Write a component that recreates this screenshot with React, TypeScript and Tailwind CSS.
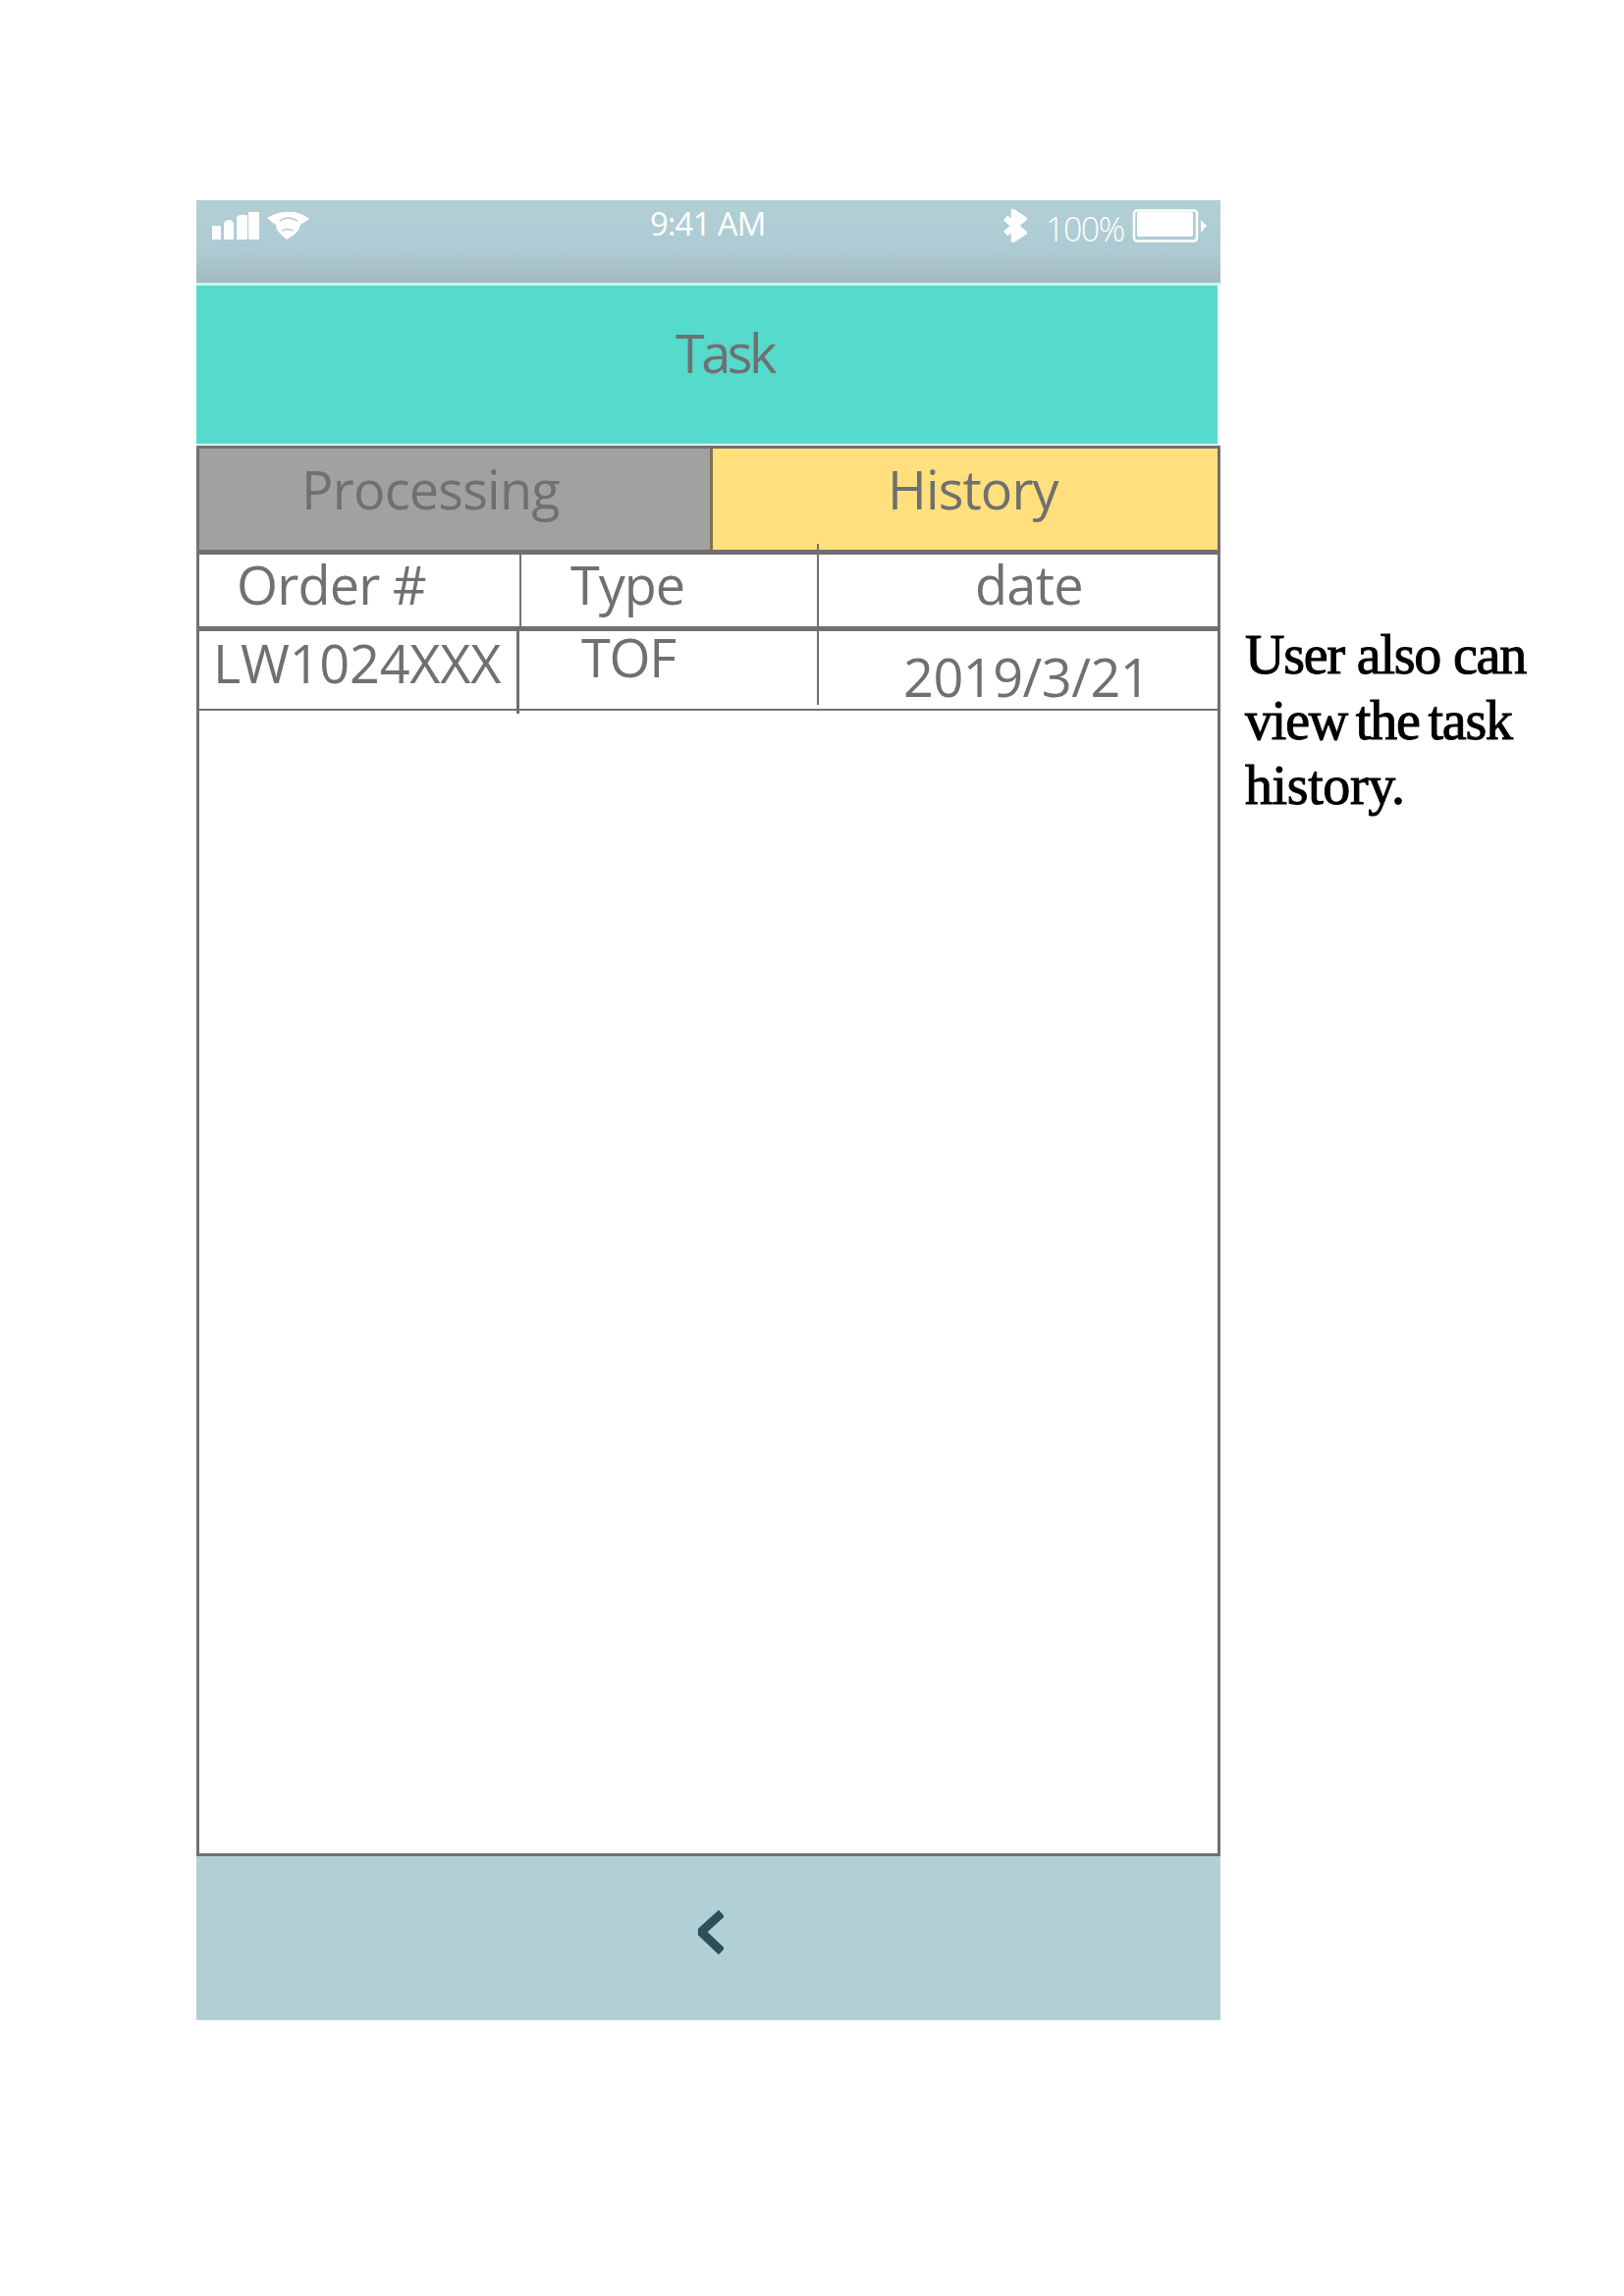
import React from "react";

const label =
  "block whitespace-nowrap font-['Open_Sans','Noto_Sans',sans-serif] text-[54px] leading-[60px] text-[#707070]";

function StatusBar() {
  return (
    <div className="flex h-[84px] items-start bg-linear-to-b from-[#b1cfd5] from-0% via-[#adcbd2] via-62% to-[#a3b8c0] to-100% text-white font-['Open_Sans',sans-serif]">
      <svg className="ml-4 mt-3 h-[29px] w-[49px]" viewBox="0 0 49 29" fill="#fff">
        <rect x="0" y="14" width="9" height="14" />
        <path d="M12 28V11l3-3h4l3 3v17z" />
        <path d="M25 28V5l3-2h8v25z" />
        <rect x="37" y="0" width="11" height="28" />
      </svg>
      <svg className="ml-1.5 mt-3 h-[29px] w-[46px]" viewBox="0 0 46 29" fill="#fff">
        <path d="M1 6Q10 1 17 0H29Q38 2 44 7Q38 11 35 13Q34 21 21 28Q10 20 10 13Q5 10 1 6Z" />
        <path d="M14 9Q22 3 32 9M16 19Q22 16 28 19" fill="none" stroke="#b9c9cf" strokeWidth="1.5" />
      </svg>
      <span className="ml-[345px] mt-[4px] w-[130px] whitespace-nowrap text-[33px] leading-[40px] tracking-[-1px]">
        9:41 AM
      </span>
      <svg className="ml-[230px] mt-[9px] h-[34px] w-[24px]" viewBox="0 0 24 34" fill="none" stroke="#fff" strokeWidth="6.5">
        <path d="M2 9L20 24L11 30V4L20 10L2 25" />
      </svg>
      <span className="ml-[19px] mt-[9px] w-[88px] whitespace-nowrap text-[34px] font-light leading-[40px] tracking-[-1.5px]">
        100%
      </span>
      <svg className="mt-[9px] h-[34px] w-[76px]" viewBox="0 0 76 34">
        <rect x="2" y="1.5" width="64" height="31" rx="3" fill="none" stroke="#fff" strokeWidth="2.5" />
        <rect x="5" y="3" width="57" height="25" rx="2" fill="#fff" />
        <path d="M70 11L76 17L70 24Z" fill="#fff" />
      </svg>
    </div>
  );
}

function Tabs() {
  return (
    <div className="flex h-[106px] border-t-[3px] border-[#707070]">
      <div className="w-[520px] bg-[#a1a1a1] pl-[104px] pt-[11px]">
        <span className={`${label} tracking-[-0.8px]`}>Processing</span>
      </div>
      <div className="grow border-l-[3px] border-[#80704f] bg-[#ffe07d] pl-[178px] pt-[11px]">
        <span className={`${label} tracking-[-0.9px]`}>History</span>
      </div>
    </div>
  );
}

function HistoryTable() {
  return (
    <div className="relative">
      <div className="flex h-[83px] border-y-[5px] border-[#707070] border-b-0">
        <div className="w-[328px] border-r-[2px] border-[#707070] pl-[38px]">
          <span className={`${label} tracking-[-0.8px]`}>Order #</span>
        </div>
        <div className="w-[304px] pl-[50px]">
          <span className={`${label} tracking-[-1px]`}>Type</span>
        </div>
        <div className="grow pl-[158px]">
          <span className={`${label} tracking-[-0.7px]`}>date</span>
        </div>
      </div>
      <div className="-mt-[5px] flex h-[86px] border-b-[2px] border-t-[5px] border-[#707070]">
        <div className="h-[84px] w-[326px] border-r-[3px] border-[#707070] pl-[14px] pt-[2px]">
          <span className={`${label} tracking-[-0.2px]`}>LW1024XXX</span>
        </div>
        <div className="w-[306px] pl-[63px]">
          <span className={`${label} -mt-[4px] tracking-[-1.2px]`}>TOF</span>
        </div>
        <div className="grow pl-[85px] pt-[16px]">
          <span className={`${label} tracking-[-0.5px]`}>2019/3/21</span>
        </div>
      </div>
      <div className="absolute left-[629px] top-[-6px] h-[164px] w-[2px] bg-[#707070]" />
    </div>
  );
}

export default function App() {
  return (
    <div className="flex h-[2339px] w-[1654px] items-start bg-white pl-[200px] pt-[204px]">
      <main className="w-[1043px]">
        <StatusBar />
        <div className="h-[3px] bg-[#c8f6f4]" />
        <header className="h-[161px] w-[1040px] bg-[#55dacc] pl-[488px] pt-[38px]">
          <h1 className={`${label} tracking-[-3.5px]`}>Task</h1>
        </header>
        <div className="h-[2px] bg-[#d5faf6]" />
        <section className="h-[1437px] border-x-[3px] border-b-[3px] border-[#707070]">
          <Tabs />
          <HistoryTable />
        </section>
        <footer className="flex h-[167px] justify-center bg-[#b1d0d6]">
          <svg className="mt-[54px] h-[47px] w-[30px]" viewBox="0 0 30 47" fill="none" stroke="#2e4e5b" strokeWidth="9" strokeLinejoin="bevel">
            <path d="M28 4L7 23L28 43" />
          </svg>
        </footer>
      </main>
      <p className="ml-[25px] mt-[430px] whitespace-nowrap font-['Liberation_Serif',serif] text-[56px] leading-[66.5px] text-black [-webkit-text-stroke:1px_black]">
        <span className="block tracking-[-1.2px]">User also can</span>
        <span className="block tracking-[-1.2px] [word-spacing:-4px]">view the task</span>
        <span className="block tracking-[-0.4px]">history.</span>
      </p>
    </div>
  );
}
